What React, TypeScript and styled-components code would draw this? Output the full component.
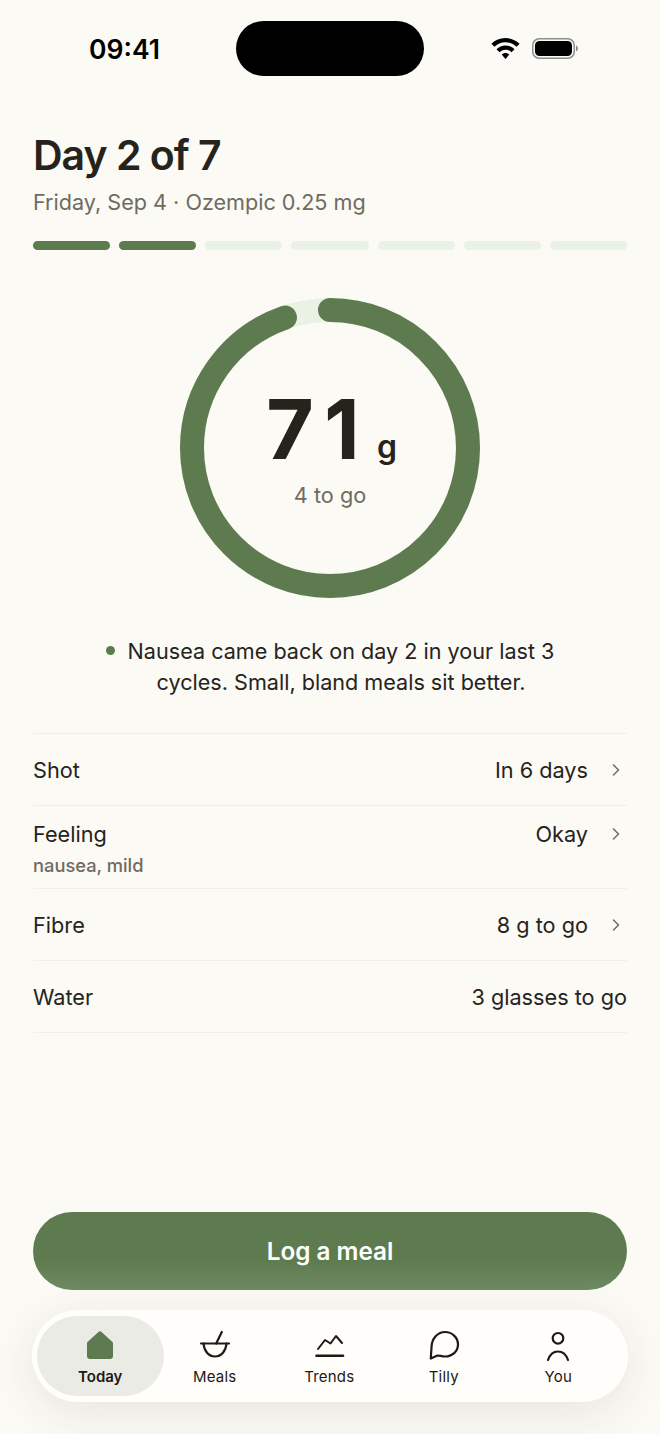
import React from 'react'
import styled, { createGlobalStyle } from 'styled-components'

const GREEN = '#5e7b50'
const INK = '#26231c'
const MUTED = '#6f6b60'
const BG = '#fbfaf5'
const FONT = 'Inter, "Noto Sans", sans-serif'

const GlobalStyle = createGlobalStyle`
  html, body {
    margin: 0;
    padding: 0;
    background: ${BG};
    font-family: ${FONT};
    -webkit-font-smoothing: antialiased;
  }
`

const Page = styled.div`
  width: 660px;
  height: 1434px;
  overflow: hidden;
  display: flex;
  flex-direction: column;
  background: ${BG};
  color: ${INK};
`

const StatusBar = styled.div`
  display: grid;
  grid-template-columns: 236px 188px 236px;
  align-items: center;
  height: 55px;
  margin-top: 21px;
`
const Time = styled.div`
  font-size: 26.5px;
  font-weight: 600;
  color: #000;
  text-align: right;
  padding-right: 76px;
`
const Island = styled.div`
  height: 55px;
  border-radius: 28px;
  background: #000;
`
const StatusIcons = styled.div`
  display: flex;
  align-items: center;
  gap: 12px;
  padding-left: 67px;
`

const Header = styled.header`
  padding: 54px 33px 0;
`
const Title = styled.h1`
  margin: 0;
  font-size: 41px;
  line-height: 50px;
  font-weight: 600;
  letter-spacing: -1px;
  color: ${INK};
`
const Subtitle = styled.p`
  margin: 7px 0 0;
  font-size: 21.6px;
  line-height: 30px;
  color: ${MUTED};
`
const Segments = styled.div`
  display: grid;
  grid-template-columns: repeat(7, 1fr);
  column-gap: 9px;
  margin-top: 24px;
`
const Segment = styled.div<{ $done?: boolean }>`
  height: 9px;
  border-radius: 5px;
  background: ${(props) => (props.$done ? GREEN : '#eaf1e5')};
`

const RingWrap = styled.div`
  position: relative;
  width: 300px;
  height: 300px;
  margin: 48px auto 0;
`
const RingCenter = styled.div`
  position: absolute;
  inset: 0;
  display: flex;
  flex-direction: column;
  align-items: center;
  padding-top: 99px;
  box-sizing: border-box;
`
const Amount = styled.div`
  display: flex;
  align-items: baseline;
  line-height: 64px;
  margin-left: 4px;
`
const Number = styled.span`
  font-size: 80px;
  font-weight: 600;
  letter-spacing: 12px;
  color: ${INK};
  -webkit-text-stroke: 2px ${INK};
`
const Unit = styled.span`
  font-size: 32px;
  font-weight: 600;
  margin-left: 6px;
  color: ${INK};
`
const ToGo = styled.div`
  font-size: 21.7px;
  line-height: 28px;
  margin-top: 2px;
  color: ${MUTED};
`

const Insight = styled.div`
  display: flex;
  justify-content: center;
  margin-top: 38px;
`
const Dot = styled.span`
  flex: none;
  width: 9px;
  height: 9px;
  border-radius: 50%;
  background: ${GREEN};
  margin: 10px 13px 0 0;
`
const InsightText = styled.p`
  margin: 0;
  text-align: center;
  font-size: 21.6px;
  line-height: 31px;
  color: ${INK};
`

const List = styled.div`
  margin: 35px 33px 0;
  border-top: 1px solid #f1efe9;
`
const Row = styled.div<{ $tall?: boolean }>`
  display: flex;
  justify-content: space-between;
  align-items: flex-start;
  box-sizing: border-box;
  height: ${(props) => (props.$tall ? 83 : 72)}px;
  padding-top: ${(props) => (props.$tall ? 14 : 22)}px;
  border-bottom: 1px solid #f1efe9;
`
const RowLabel = styled.div`
  font-size: 21.7px;
  line-height: 28px;
  color: ${INK};
`
const RowSub = styled.div`
  font-size: 18.3px;
  line-height: 24px;
  font-weight: 500;
  color: ${MUTED};
  margin-top: 5px;
`
const RowValue = styled.div`
  display: flex;
  align-items: center;
  gap: 24px;
  font-size: 21.7px;
  line-height: 28px;
  color: ${INK};
`
const Chevron = styled.svg`
  width: 8px;
  height: 12px;
  margin-right: 7px;
  fill: none;
  stroke: ${MUTED};
  stroke-width: 1.5;
  stroke-linecap: round;
  stroke-linejoin: round;
`

const Spacer = styled.div`
  flex: 1;
`

const LogButton = styled.button`
  display: block;
  width: 594px;
  height: 78px;
  margin: 0 33px;
  border: 0;
  border-radius: 39px;
  background: linear-gradient(180deg, ${GREEN} 0%, ${GREEN} 62%, #6d8a62 100%);
  color: #fff;
  font-family: ${FONT};
  font-size: 24.3px;
  font-weight: 600;
`

const NavBar = styled.nav`
  display: grid;
  grid-template-columns: repeat(5, 114.5px);
  align-items: stretch;
  box-sizing: border-box;
  width: 596px;
  height: 92px;
  margin: 20px 32px 32px;
  padding: 6px 11px;
  border-radius: 46px;
  background: #fffefb;
  box-shadow: 0 10px 48px rgba(40, 36, 28, 0.1);
`
const NavItem = styled.div<{ $active?: boolean }>`
  display: flex;
  flex-direction: column;
  align-items: center;
  padding-top: 14px;
  border-radius: 40px;
  background: ${(props) => (props.$active ? '#ebebe6' : 'transparent')};
  margin: ${(props) => (props.$active ? '0 -6px' : '0')};
`
const NavIcon = styled.svg`
  width: 32px;
  height: 32px;
  fill: none;
  stroke: #1c1a15;
  stroke-width: 2.2;
  stroke-linecap: round;
  stroke-linejoin: round;
`
const NavLabel = styled.span<{ $active?: boolean }>`
  margin-top: 5px;
  font-size: 15px;
  line-height: 20px;
  font-weight: ${(props) => (props.$active ? 600 : 400)};
  letter-spacing: ${(props) => (props.$active ? 0 : 0.2)}px;
  color: #1c1a15;
`

const segments = [true, true, false, false, false, false, false]

// ring geometry: 71 of 75 g eaten
const RADIUS = 138
const CIRCUMFERENCE = 2 * Math.PI * RADIUS
const PROGRESS = 71 / 75

const rows = [
  { label: 'Shot', value: 'In 6 days', more: true },
  { label: 'Feeling', sub: 'nausea, mild', value: 'Okay', more: true },
  { label: 'Fibre', value: '8 g to go', more: true },
  { label: 'Water', value: '3 glasses to go', more: false },
]

const HomeIcon = () => (
  <NavIcon viewBox="0 0 32 32" style={{ stroke: 'none' }}>
    <path
      fill={GREEN}
      d="M14.4 2.1a2.3 2.3 0 0 1 3.2 0l10.6 9.6a2.6 2.6 0 0 1 .8 1.9V26a3 3 0 0 1-3 3H6a3 3 0 0 1-3-3V13.6a2.6 2.6 0 0 1 .8-1.9z"
    />
  </NavIcon>
)
const BowlIcon = () => (
  <NavIcon viewBox="0 0 32 32">
    <path d="M2 13.5h28" />
    <path d="M4.5 13.5c.6 8 5.5 13 11.5 13s10.900-5 11.500-13" />
    <path d="M22.800 2 17.200 13.500" />
  </NavIcon>
)
const TrendsIcon = () => (
  <NavIcon viewBox="0 0 32 32">
    <path d="M5 19l7-9 5.500 3.500L23 6l6 7" strokeWidth="2" />
    <path d="M3.500 25.800h26.500" strokeWidth="2.600" />
  </NavIcon>
)
const TillyIcon = () => (
  <NavIcon viewBox="0 0 32 32">
    <path d="M2.800 28.500 3.600 16C4.200 8 10 2 17 2c7 0 13 5.500 13 12.500S24 26.500 17 26.500c-3 0-5.500-1-7.500-1z" />
  </NavIcon>
)
const YouIcon = () => (
  <NavIcon viewBox="0 0 32 32">
    <circle cx="16" cy="8.300" r="5.300" />
    <path d="M6 30c2-6 6-8.500 10-8.500s8 2.500 10 8.500" />
  </NavIcon>
)

const navItems = [
  { label: 'Today', icon: <HomeIcon />, active: true },
  { label: 'Meals', icon: <BowlIcon /> },
  { label: 'Trends', icon: <TrendsIcon /> },
  { label: 'Tilly', icon: <TillyIcon /> },
  { label: 'You', icon: <YouIcon /> },
]

export default function App() {
  return (
    <Page>
      <GlobalStyle />
      <StatusBar>
        <Time>09:41</Time>
        <Island />
        <StatusIcons>
          <svg width="29" height="22" viewBox="0 0 29 22">
            <path d="M14.500 0C9 0 4 2.200.4 5.800l3 3C6.200 6 10.100 4.200 14.500 4.200S22.800 6 25.600 8.800l3-3C25 2.200 20 0 14.500 0z" />
            <path d="M14.500 7.500c-3.500 0-6.700 1.400-9 3.700l3 3c1.500-1.500 3.700-2.500 6-2.500s4.500 1 6 2.500l3-3c-2.300-2.300-5.500-3.700-9-3.700z" />
            <path d="M14.500 15c-1.500 0-2.800.6-3.800 1.500l3.800 4.500 3.800-4.500c-1-.9-2.300-1.500-3.800-1.500z" />
          </svg>
          <svg width="46" height="21" viewBox="0 0 46 21">
            <rect x="0.750" y="0.750" width="41.500" height="19.500" rx="6.500" fill="none" stroke="#8e8e8a" strokeWidth="1.500" />
            <rect x="3" y="3" width="37" height="15" rx="4.500" fill="#000" />
            <path d="M44 7.500c1.200.4 2 1.600 2 3s-.8 2.600-2 3z" fill="#8e8e8a" />
          </svg>
        </StatusIcons>
      </StatusBar>

      <Header>
        <Title>Day 2 of 7</Title>
        <Subtitle>Friday, Sep 4 · Ozempic 0.25 mg</Subtitle>
        <Segments>
          {segments.map((done, i) => (
            <Segment key={i} $done={done} />
          ))}
        </Segments>
      </Header>

      <RingWrap>
        <svg width="300" height="300" viewBox="0 0 300 300">
          <circle cx="150" cy="150" r={RADIUS} fill="none" stroke="#eaf1e5" strokeWidth="24" />
          <circle
            cx="150"
            cy="150"
            r={RADIUS}
            fill="none"
            stroke={GREEN}
            strokeWidth="24"
            strokeLinecap="round"
            strokeDasharray={`${CIRCUMFERENCE * PROGRESS} ${CIRCUMFERENCE}`}
            transform="rotate(-90 150 150)"
          />
        </svg>
        <RingCenter>
          <Amount>
            <Number>71</Number>
            <Unit>g</Unit>
          </Amount>
          <ToGo>4 to go</ToGo>
        </RingCenter>
      </RingWrap>

      <Insight>
        <Dot />
        <InsightText>
          Nausea came back on day 2 in your last 3
          <br />
          cycles. Small, bland meals sit better.
        </InsightText>
      </Insight>

      <List>
        {rows.map((row) => (
          <Row key={row.label} $tall={!!row.sub}>
            <div>
              <RowLabel>{row.label}</RowLabel>
              {row.sub && <RowSub>{row.sub}</RowSub>}
            </div>
            <RowValue>
              {row.value}
              {row.more && (
                <Chevron viewBox="0 0 8 12">
                  <path d="M1.500 1 6.500 6l-5 5" />
                </Chevron>
              )}
            </RowValue>
          </Row>
        ))}
      </List>

      <Spacer />

      <LogButton>Log a meal</LogButton>

      <NavBar>
        {navItems.map((item) => (
          <NavItem key={item.label} $active={item.active}>
            {item.icon}
            <NavLabel $active={item.active}>{item.label}</NavLabel>
          </NavItem>
        ))}
      </NavBar>
    </Page>
  )
}
